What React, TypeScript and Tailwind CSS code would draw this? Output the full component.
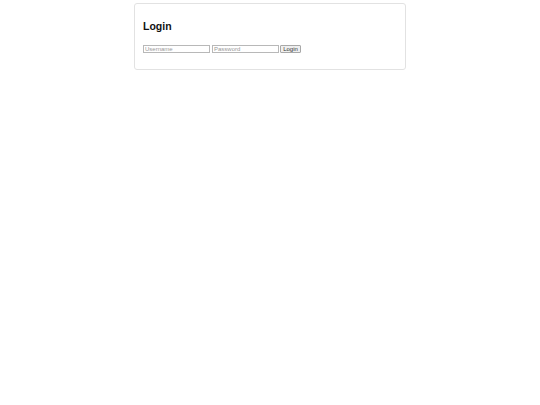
export default function App() {
  return (
    <div className="w-full min-h-[405px] bg-white" style={{ fontFamily: '"Liberation Sans", Arial, sans-serif' }}>
      <div className="mx-auto mt-[3px] w-[272px] rounded-[3px] border border-[#e2e2e2] px-[8px] pt-[15px] pb-[16px]">
        <h2 className="text-[10.5px] leading-[14px] font-bold text-[#111]">Login</h2>
        <div className="mt-[12px] flex items-center">
          <input
            placeholder="Username"
            className="h-[8px] w-[67px] border border-[#b8b8b8] px-[1px] text-[6px] leading-[6px] outline-none placeholder:text-[#999]"
          />
          <input
            placeholder="Password"
            className="ml-[2px] h-[8px] w-[67px] border border-[#b8b8b8] px-[1px] text-[6px] leading-[6px] outline-none placeholder:text-[#999]"
          />
          <button className="ml-[1px] flex h-[8px] w-[21px] items-center justify-center rounded-[1px] border border-[#a8a8a8] bg-[#efefef] text-[6px] leading-[6px] text-[#333]">
            Login
          </button>
        </div>
      </div>
    </div>
  );
}
